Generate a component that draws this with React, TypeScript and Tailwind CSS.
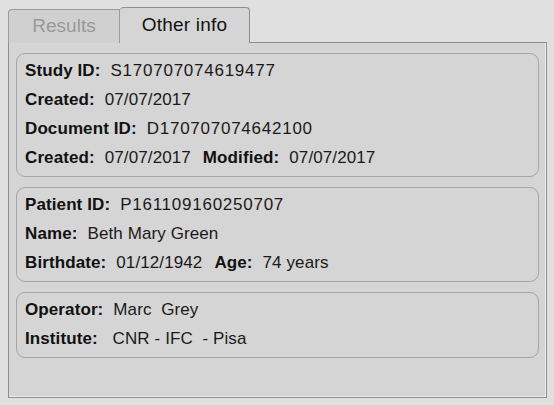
import React from "react";

type Field = { label: string; value: string; id?: boolean };

const boxes: Field[][][] = [
  [
    [{ label: "Study ID:", value: "S170707074619477", id: true }],
    [{ label: "Created:", value: "07/07/2017" }],
    [{ label: "Document ID:", value: "D170707074642100", id: true }],
    [
      { label: "Created:", value: "07/07/2017" },
      { label: "Modified:", value: "07/07/2017" },
    ],
  ],
  [
    [{ label: "Patient ID:", value: "P161109160250707", id: true }],
    [{ label: "Name:", value: "Beth Mary Green" }],
    [
      { label: "Birthdate:", value: "01/12/1942" },
      { label: "Age:", value: "74 years" },
    ],
  ],
  [
    [{ label: "Operator:", value: "Marc  Grey" }],
    [{ label: "Institute:", value: " CNR - IFC  - Pisa" }],
  ],
];

const InfoBox = ({ rows }: { rows: Field[][] }) => (
  <div className="border border-[#a6a6a6] rounded-[9px] pl-[8px] pt-[2px] pb-[4px]">
    {rows.map((row, i) => (
      <div key={i} className="h-[29px] flex items-center">
        {row.map((f, j) => (
          <span key={j} className={`flex items-center ${j > 0 ? "ml-[12px]" : ""}`}>
            <span className="font-bold text-[#111] tracking-[0.1px]">{f.label}</span>
            <span
              className={`ml-[10px] whitespace-pre text-[#1a1a1a] ${
                f.id ? "tracking-[0.75px]" : "tracking-[0.1px]"
              }`}
            >
              {f.value}
            </span>
          </span>
        ))}
      </div>
    ))}
  </div>
);

export default function App() {
  return (
    <div
      className="w-[554px] h-[405px] bg-[#e0e0e0] pl-[8px] pt-[7px] overflow-hidden"
      style={{ fontFamily: '"Liberation Sans", Arial, sans-serif' }}
    >
      {/* Tabs */}
      <div className="flex items-end -mb-px relative z-10 text-[19px]">
        <div className="w-[112px] h-[34px] bg-[#d0d0d0] border border-[#9a9a9a] border-b-0 rounded-tl-[4px] flex items-center justify-center text-[#999]">
          Results
        </div>
        <div className="w-[130px] h-[36px] bg-[#d5d5d5] border border-[#8e8e8e] border-b-0 border-l-0 rounded-t-[4px] flex items-center justify-center text-[#111] tracking-[0.2px]">
          Other info
        </div>
      </div>

      {/* Panel */}
      <div className="w-[539px] h-[356px] bg-[#d5d5d5] border border-[#8e8e8e] shadow-[inset_-1px_-1px_0_#ececec] px-[7px] pt-[10px] flex flex-col gap-[10px] text-[17px]">
        {boxes.map((rows, i) => (
          <InfoBox key={i} rows={rows} />
        ))}
      </div>
    </div>
  );
}
